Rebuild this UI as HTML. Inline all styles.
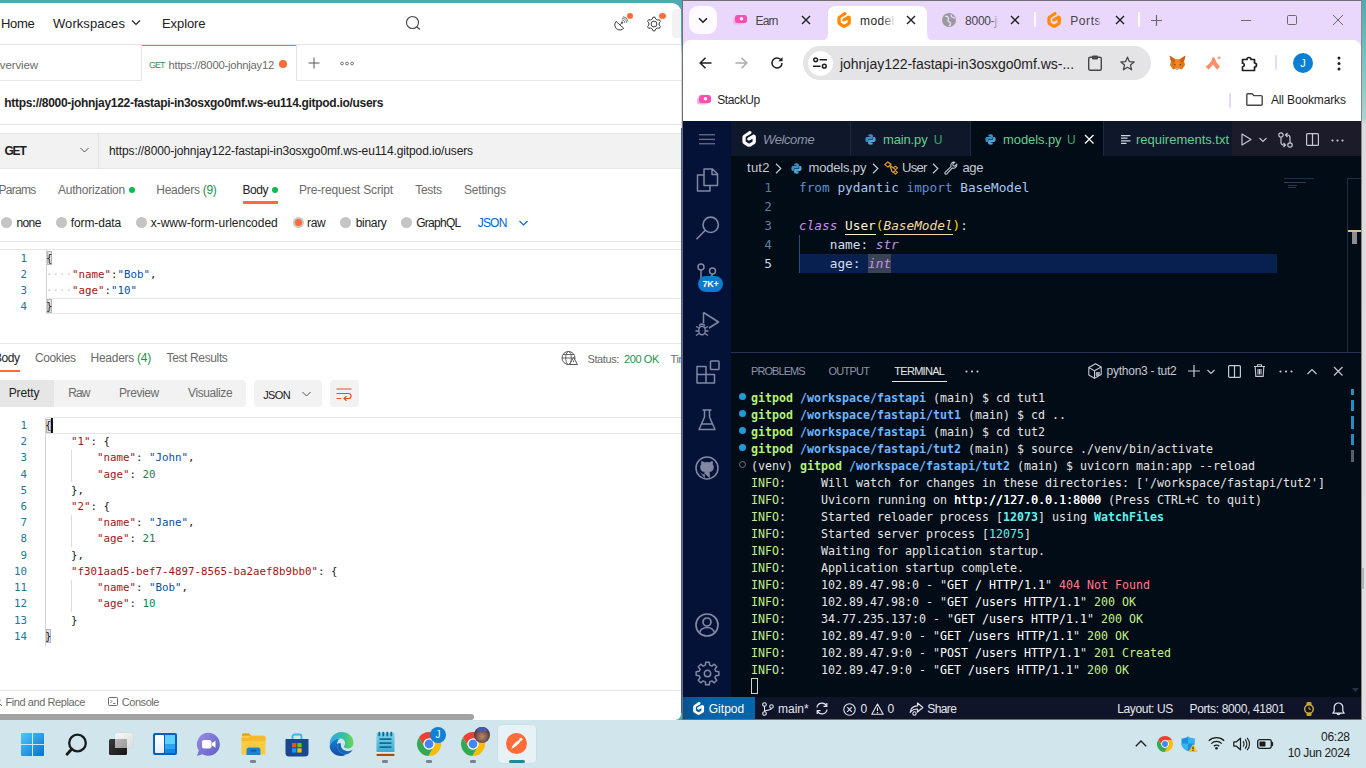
<!DOCTYPE html>
<html lang="en">
<head>
<meta charset="utf-8">
<title>Postman and Gitpod workspace</title>
<style>
*{box-sizing:border-box;margin:0;padding:0}
html,body{width:1366px;height:768px;overflow:hidden;background:#4fa9b1;font-family:"Liberation Sans",sans-serif}
#root{position:relative;width:1366px;height:768px;overflow:hidden;background:#4fa9b1}
.a{position:absolute}
.t{position:absolute;white-space:nowrap;line-height:16px;height:16px}
svg{position:absolute;overflow:visible}
/* ---------- Postman ---------- */
#pm{position:absolute;left:0;top:0;width:681px;height:720px;overflow:hidden;color:#212121}
#pm .t{font-size:12px;color:#6b6b6b;margin-top:.5px}
#pm .hl{position:absolute;left:0;width:681px;height:1px;background:#e6e6e6}
#pm .nav{font-size:14px;color:#212121}
#pm .mono,#pm .ln{margin-top:.5px}
.rad{position:absolute;width:11px;height:11px;border-radius:50%;background:#c4c4c4}
.mono{font-family:"DejaVu Sans Mono","Liberation Mono",monospace;font-size:10.800px;letter-spacing:0;white-space:pre}
.ln{position:absolute;width:27px;text-align:right;left:0;color:#237893;font-family:"DejaVu Sans Mono","Liberation Mono",monospace;font-size:10.800px;line-height:16px;height:16px}
.cl{position:absolute;left:46px;line-height:16px;height:16px;color:#212121}
.k{color:#a31515}.s{color:#0451a5}.n{color:#098658}
/* ---------- Chrome ---------- */
#ch{position:absolute;left:0;top:0;width:1361px;height:720px;overflow:hidden}
#ch .t{font-size:12px;color:#1f1f1f}
/* ---------- VS Code ---------- */
#vs{position:absolute;left:0;top:0;width:1361px;height:720px;color:#ccc;overflow:hidden}
#vs .t{font-size:13px;color:#c5c9d4}
.code{position:absolute;left:799px;font-family:"DejaVu Sans Mono","Liberation Mono",monospace;font-size:12.75px;line-height:19px;height:19px;white-space:pre;color:#d6deeb}
.cln{position:absolute;left:742px;width:30px;text-align:right;font-family:"DejaVu Sans Mono","Liberation Mono",monospace;font-size:12.75px;line-height:19px;height:19px;color:#4b6479}
.term{position:absolute;left:751px;font-family:"DejaVu Sans Mono","Liberation Mono",monospace;font-size:11.63px;line-height:17px;height:17px;white-space:pre;color:#e4e4e4}
.g{color:#b5f078;font-weight:bold}.b{color:#6cb6ff;font-weight:bold}.gi{color:#c3f08a}.cy{color:#5ef2f0;font-weight:bold}.w{color:#fff}.r{color:#ff7b88}
/* ---------- Taskbar ---------- */
#tb{position:absolute;left:0;top:720px;width:1366px;height:48px;background:#d0e5ec}
</style>
</head>
<body>
<div id="root">

<!-- ================= POSTMAN ================= -->
<div class="a" style="left:0;top:3px;width:681px;height:717px;background:#fff;border-radius:0 9px 6px 0"></div>
<div id="pm">
  <!-- header -->
  <div class="t" style="left:1px;top:15.500px;letter-spacing:-0.297px;font-size:13px;color:#212121">Home</div>
  <div class="t" style="left:53px;top:15.500px;letter-spacing:0.070px;font-size:13px;color:#212121">Workspaces</div>
  <svg style="left:131px;top:19px" width="10" height="8" viewBox="0 0 10 8"><path d="M1 1.5 L5 5.5 L9 1.5" fill="none" stroke="#212121" stroke-width="1.2"/></svg>
  <div class="t" style="left:162px;top:15.500px;letter-spacing:-0.083px;font-size:13px;color:#212121">Explore</div>
  <svg style="left:405px;top:15px" width="18" height="18" viewBox="0 0 18 18"><circle cx="7.5" cy="7.5" r="6" fill="none" stroke="#444" stroke-width="1.1"/><path d="M12 12 L15 14.5" stroke="#444" stroke-width="1.1" fill="none"/></svg>
  <svg style="left:612px;top:14px" width="18" height="18" viewBox="0 0 18 18"><path d="M4.100 7.400A5.100 5.100 0 0 0 11.700 14.300Z" fill="none" stroke="#3d3d3d" stroke-width="1" stroke-linejoin="round"/><path d="M7.900 10.850L9.600 9.100" stroke="#3d3d3d" stroke-width="1"/><circle cx="10.100" cy="8.600" r="1" fill="#3d3d3d"/><path d="M9.76 5.91A2.8 2.8 0 0 1 12.79 8.94 M10.00 4.10A4.6 4.6 0 0 1 14.60 8.70 M10.86 2.56A6.2 6.2 0 0 1 16.06 7.41" fill="none" stroke="#555" stroke-width=".8"/></svg>
  <div class="a" style="left:627px;top:13px;width:6.200px;height:6.200px;border-radius:50%;background:#ff6c37"></div>
  <svg style="left:646px;top:15.700px" width="16" height="16" viewBox="0 0 16 16"><path d="M6.36 2.96L6.99 1.17L9.01 1.17L9.64 2.96L11.55 4.06L13.41 3.71L14.42 5.46L13.18 6.90L13.18 9.10L14.42 10.54L13.41 12.29L11.55 11.94L9.64 13.04L9.01 14.83L6.99 14.83L6.36 13.04L4.45 11.94L2.59 12.29L1.58 10.54L2.82 9.10L2.82 6.90L1.58 5.46L2.59 3.71L4.45 4.06Z M5.10 8.00a2.90 2.90 0 1 0 5.80 0a2.90 2.90 0 1 0 -5.80 0Z" fill="none" stroke="#3d3d3d" stroke-width="1" stroke-linejoin="round"/></svg>
  <div class="a" style="left:659px;top:13px;width:6.800px;height:6.200px;border-radius:50%;background:#ff6c37"></div>
  <div class="a" style="left:672px;top:9px;width:12px;height:29px;background:#f2f2f2;border-radius:4px"></div>
  <div class="hl" style="top:44px"></div>
  <!-- tab bar -->
  <div class="t" style="left:-9px;top:56.5px;letter-spacing:-0.117px;font-size:11.500px">Overview</div>
  <div class="a" style="left:141px;top:45px;width:1px;height:35px;background:#e6e6e6"></div>
  <div class="a" style="left:142px;top:45px;width:154px;height:1px;background:#ff6c37"></div>
  <div class="a" style="left:296px;top:45px;width:1px;height:35px;background:#e6e6e6"></div>
  <div class="t" style="left:149px;top:56.5px;letter-spacing:-1.005px;font-size:9px;color:#1f9d55">GET</div>
  <div class="t" style="left:168.5px;top:56.5px;letter-spacing:-0.258px;font-size:11.300px">https://8000-johnjay12</div>
  <div class="a" style="left:279px;top:60px;width:8px;height:7.5px;border-radius:50%;background:#ff6c37"></div>
  <svg style="left:308px;top:57px" width="12" height="12" viewBox="0 0 12 12"><path d="M6 0.5V11.5M0.5 6H11.500" stroke="#555" stroke-width="1"/></svg>
  <svg style="left:340px;top:61px" width="14" height="5" viewBox="0 0 14 5"><circle cx="2" cy="2.500" r="1.400" fill="none" stroke="#555" stroke-width=".8"/><circle cx="7" cy="2.500" r="1.400" fill="none" stroke="#555" stroke-width=".8"/><circle cx="12" cy="2.500" r="1.400" fill="none" stroke="#555" stroke-width=".8"/></svg>
  <div class="hl" style="top:80px"></div>
  <div class="a" style="left:142px;top:80px;width:154px;height:1px;background:#fff"></div>
  <!-- title -->
  <div class="t" style="left:4.25px;top:94px;letter-spacing:-0.304px;font-weight:bold;color:#212121">https://8000-johnjay122-fastapi-in3osxgo0mf.ws-eu114.gitpod.io/users</div>
  <div class="hl" style="top:124px"></div>
  <!-- url bar -->
  <div class="a" style="left:0;top:133px;width:681px;height:36px;background:#f2f2f2;border-top:1px solid #e6e6e6;border-bottom:1px solid #e6e6e6"></div>
  <div class="a" style="left:98px;top:133px;width:1px;height:36px;background:#e2e2e2"></div>
  <div class="t" style="left:4.5px;top:142px;letter-spacing:-1.224px;font-weight:bold;color:#212121">GET</div>
  <svg style="left:80px;top:147px" width="9" height="7" viewBox="0 0 9 7"><path d="M0.5 1 L4.5 5 L8.500 1" fill="none" stroke="#555" stroke-width="1"/></svg>
  <div class="t" style="left:109px;top:142px;letter-spacing:-0.118px;color:#212121">https://8000-johnjay122-fastapi-in3osxgo0mf.ws-eu114.gitpod.io/users</div>
  <!-- request tabs -->
  <div class="t" style="left:-1.5px;top:181px;letter-spacing:-0.724px;">Params</div>
  <div class="t" style="left:58px;top:181px;letter-spacing:-0.234px;">Authorization</div>
  <div class="a" style="left:129px;top:186.5px;width:6px;height:6px;border-radius:50%;background:#0cbb52"></div>
  <div class="t" style="left:156.25px;top:181px;letter-spacing:-0.284px;">Headers <span style="color:#1f8f4d">(9)</span></div>
  <div class="t" style="left:242.5px;top:181px;letter-spacing:-0.465px;color:#212121">Body</div>
  <div class="a" style="left:271.500px;top:186.5px;width:6px;height:6px;border-radius:50%;background:#0cbb52"></div>
  <div class="a" style="left:242.5px;top:201px;width:35px;height:2.5px;background:#ff6c37"></div>
  <div class="t" style="left:299px;top:181px;letter-spacing:-0.150px;">Pre-request Script</div>
  <div class="t" style="left:415.25px;top:181px;letter-spacing:-0.303px;">Tests</div>
  <div class="t" style="left:464px;top:181px;letter-spacing:-0.201px;">Settings</div>
  <!-- radios -->
  <div class="rad" style="left:1.25px;top:217px"></div>
  <div class="rad" style="left:56px;top:217px"></div>
  <div class="rad" style="left:135.75px;top:217px"></div>
  <div class="rad" style="left:340.25px;top:217px"></div>
  <div class="rad" style="left:401px;top:217px"></div>
  <div class="rad" style="left:292.500px;top:217px;background:#ff6c37;border:2px solid #c9c9c9"></div>
  <div class="t" style="left:16.5px;top:214px;letter-spacing:-0.613px;color:#212121">none</div>
  <div class="t" style="left:70.75px;top:214px;letter-spacing:-0.123px;color:#212121">form-data</div>
  <div class="t" style="left:150.75px;top:214px;letter-spacing:-0.018px;color:#212121">x-www-form-urlencoded</div>
  <div class="t" style="left:307px;top:214px;letter-spacing:-0.281px;color:#212121">raw</div>
  <div class="t" style="left:355.75px;top:214px;letter-spacing:-0.323px;color:#212121">binary</div>
  <div class="t" style="left:416.25px;top:214px;letter-spacing:-0.730px;color:#212121">GraphQL</div>
  <div class="t" style="left:477.75px;top:214px;letter-spacing:-0.816px;color:#0265d2">JSON</div>
  <svg style="left:518.500px;top:219.500px" width="9" height="7" viewBox="0 0 9 7"><path d="M0.5 1 L4.5 5 L8.500 1" fill="none" stroke="#0265d2" stroke-width="1.1"/></svg>
  <div class="hl" style="top:241px"></div>
  <!-- request editor -->
  <div class="hl" style="top:249px"></div>
  <div class="hl" style="top:298px;left:46px"></div>
  <div class="hl" style="top:313px;left:46px"></div>
  <div class="a" style="left:46px;top:250px;width:1px;height:64px;background:#d4d4d4"></div>
  <div class="ln" style="top:250.25px">1</div>
  <div class="ln" style="top:266.25px">2</div>
  <div class="ln" style="top:282.25px">3</div>
  <div class="ln" style="top:298.25px">4</div>
  <div class="a" style="left:46.5px;top:251px;width:5.5px;height:14px;border:1px solid #b4b4b4;background:#e4e4e4"></div>
  <div class="a" style="left:46.5px;top:299px;width:5.5px;height:14px;border:1px solid #b4b4b4;background:#e4e4e4"></div>
  <div class="cl mono" style="top:250.250px">{</div>
  <div class="cl mono" style="top:266.250px"><span style="color:#c8c8c8">····</span><span class="k">"name"</span>:<span class="s">"Bob"</span>,</div>
  <div class="cl mono" style="top:282.250px"><span style="color:#c8c8c8">····</span><span class="k">"age"</span>:<span class="s">"10"</span></div>
  <div class="cl mono" style="top:298.250px">}</div>
  <!-- response header -->
  <div class="hl" style="top:343px"></div>
  <div class="t" style="left:-6px;top:349px;letter-spacing:-0.465px;color:#212121">Body</div>
  <div class="a" style="left:0;top:369.500px;width:19.500px;height:2.500px;background:#ff6c37"></div>
  <div class="t" style="left:35px;top:349px;letter-spacing:-0.408px;">Cookies</div>
  <div class="t" style="left:90.5px;top:349px;letter-spacing:-0.261px;">Headers <span style="color:#1f8f4d">(4)</span></div>
  <div class="t" style="left:166.5px;top:349px;letter-spacing:-0.363px;">Test Results</div>
  <svg style="left:561px;top:350px" width="17" height="16" viewBox="0 0 17 16"><circle cx="7.500" cy="8" r="6.500" fill="none" stroke="#555" stroke-width="1"/><ellipse cx="7.500" cy="8" rx="2.800" ry="6.500" fill="none" stroke="#555" stroke-width=".9"/><path d="M1 8H14M2 4.500H13" stroke="#555" stroke-width=".9" fill="none"/><path d="M12.500 7.500L16.500 14.500H8.500Z" fill="#fff" stroke="#555" stroke-width="1"/><path d="M12.500 10.500V12.200" stroke="#555" stroke-width="1"/></svg>
  <div class="t" style="left:587.5px;top:350px;letter-spacing:-0.393px;font-size:11px">Status:</div>
  <div class="t" style="left:624px;top:350px;letter-spacing:-0.385px;font-size:11px;color:#1f8f4d">200 OK</div>
  <div class="t" style="left:670.5px;top:350px;letter-spacing:-0.319px;font-size:11px">Time:</div>
  <!-- view bar -->
  <div class="a" style="left:-6px;top:380px;width:252px;height:27px;background:#f2f2f2;border-radius:4px"></div>
  <div class="a" style="left:-6px;top:380px;width:60px;height:27px;background:#e6e6e6;border-radius:4px 0 0 4px"></div>
  <div class="t" style="left:8.75px;top:384px;letter-spacing:-0.141px;color:#212121">Pretty</div>
  <div class="t" style="left:68.25px;top:384px;letter-spacing:-0.922px;">Raw</div>
  <div class="t" style="left:119px;top:384px;letter-spacing:-0.420px;">Preview</div>
  <div class="t" style="left:188px;top:384px;letter-spacing:-0.396px;">Visualize</div>
  <div class="a" style="left:254px;top:380px;width:68px;height:27px;background:#f2f2f2;border-radius:4px"></div>
  <div class="t" style="left:263.25px;top:386px;letter-spacing:-0.648px;color:#212121;font-size:11px">JSON</div>
  <svg style="left:302px;top:391px" width="9" height="7" viewBox="0 0 9 7"><path d="M0.5 1 L4.5 5 L8.500 1" fill="none" stroke="#555" stroke-width="1"/></svg>
  <div class="a" style="left:329.500px;top:380px;width:29px;height:27px;background:#f2f2f2;border-radius:4px"></div>
  <svg style="left:336px;top:387px" width="16" height="14" viewBox="0 0 16 14"><path d="M0.5 2H15.500M0.5 6.500H12.500a2.500 2.500 0 0 1 0 5H8.500M0.5 11.500H5" fill="none" stroke="#e8501e" stroke-width="1.200"/><path d="M10.500 9.200L8 11.500L10.500 13.800" fill="none" stroke="#e8501e" stroke-width="1.200"/></svg>
  <!-- response editor -->
  <div class="hl" style="top:417px;left:46px"></div>
  <div class="hl" style="top:433px;left:46px"></div>
  <div class="a" style="left:45px;top:418px;width:1px;height:228px;background:#d4d4d4"></div>
  <div class="a" style="left:45.5px;top:418.5px;width:5.5px;height:14px;border:1px solid #b4b4b4;background:#e4e4e4"></div>
  <div class="a" style="left:51px;top:418px;width:1.500px;height:15px;background:#111"></div>
  <div class="a" style="left:45.5px;top:628.5px;width:5.5px;height:14px;border:1px solid #b4b4b4;background:#e4e4e4"></div>
  <div class="a" style="left:71px;top:450px;width:1px;height:32px;background:#dcdcdc"></div>
  <div class="a" style="left:71px;top:515px;width:1px;height:32px;background:#dcdcdc"></div>
  <div class="a" style="left:71px;top:579.5px;width:1px;height:32px;background:#dcdcdc"></div>
  <div class="ln" style="top:417.50px">1</div><div class="cl mono" style="left:45px;top:417.50px">{</div>
  <div class="ln" style="top:433.71px">2</div><div class="cl mono" style="left:45px;top:433.71px">    <span class="k">"1"</span>: {</div>
  <div class="ln" style="top:449.92px">3</div><div class="cl mono" style="left:45px;top:449.92px">        <span class="k">"name"</span>: <span class="s">"John"</span>,</div>
  <div class="ln" style="top:466.13px">4</div><div class="cl mono" style="left:45px;top:466.13px">        <span class="k">"age"</span>: <span class="n">20</span></div>
  <div class="ln" style="top:482.34px">5</div><div class="cl mono" style="left:45px;top:482.34px">    },</div>
  <div class="ln" style="top:498.55px">6</div><div class="cl mono" style="left:45px;top:498.55px">    <span class="k">"2"</span>: {</div>
  <div class="ln" style="top:514.76px">7</div><div class="cl mono" style="left:45px;top:514.76px">        <span class="k">"name"</span>: <span class="s">"Jane"</span>,</div>
  <div class="ln" style="top:530.97px">8</div><div class="cl mono" style="left:45px;top:530.97px">        <span class="k">"age"</span>: <span class="n">21</span></div>
  <div class="ln" style="top:547.18px">9</div><div class="cl mono" style="left:45px;top:547.18px">    },</div>
  <div class="ln" style="top:563.39px">10</div><div class="cl mono" style="left:45px;top:563.39px">    <span class="k">"f301aad5-bef7-4897-8565-ba2aef8b9bb0"</span>: {</div>
  <div class="ln" style="top:579.60px">11</div><div class="cl mono" style="left:45px;top:579.60px">        <span class="k">"name"</span>: <span class="s">"Bob"</span>,</div>
  <div class="ln" style="top:595.81px">12</div><div class="cl mono" style="left:45px;top:595.81px">        <span class="k">"age"</span>: <span class="n">10</span></div>
  <div class="ln" style="top:612.02px">13</div><div class="cl mono" style="left:45px;top:612.02px">    }</div>
  <div class="ln" style="top:628.23px">14</div><div class="cl mono" style="left:45px;top:628.23px">}</div>
  <!-- footer -->
  <div class="hl" style="top:690px"></div>
  <svg style="left:-8.500px;top:696px" width="11" height="11" viewBox="0 0 11 11"><circle cx="4.500" cy="4.500" r="3.500" fill="none" stroke="#6b6b6b" stroke-width="1"/><path d="M7 7L10 10" stroke="#6b6b6b" stroke-width="1"/></svg>
  <div class="t" style="left:5.5px;top:693.5px;letter-spacing:-0.421px;font-size:11px">Find and Replace</div>
  <svg style="left:108px;top:697px" width="10" height="9" viewBox="0 0 10 9"><rect x=".5" y=".5" width="9" height="8" rx="1" fill="none" stroke="#6b6b6b" stroke-width="1"/><path d="M2.500 3L4 4.500L2.500 6M5 6.500H7.500" fill="none" stroke="#6b6b6b" stroke-width=".9"/></svg>
  <div class="t" style="left:121.75px;top:693.5px;letter-spacing:-0.444px;font-size:11px">Console</div>
  <div class="a" style="left:0;top:714px;width:473.500px;height:6px;background:#a3a3a3;border-radius:0 3px 3px 0"></div>
</div>
<div class="a" style="left:681px;top:10px;width:1px;height:125px;background:linear-gradient(180deg,#4fa9b1 0,#5fb0b6 24%,#c9d9da 36%,#e2e2e2 100%)"></div>
<div class="a" style="left:681px;top:128px;width:1px;height:585px;background:#3f5f96"></div>

<!-- ================= CHROME ================= -->
<div class="a" style="left:682px;top:0;width:680px;height:121px;background:#707070"></div>
<div class="a" style="left:683px;top:1px;width:678px;height:52px;background:#ead7fc"></div>
<div id="ch">
  <!-- tab strip -->
  <div class="a" style="left:689px;top:6px;width:27.500px;height:27.500px;border-radius:9px;background:#fdfbff"></div>
  <svg style="left:698px;top:16.500px" width="10" height="7" viewBox="0 0 10 7"><path d="M1 1.200L5 5.200L9 1.200" fill="none" stroke="#1f1f1f" stroke-width="1.600"/></svg>
  <svg style="left:732.5px;top:15px" width="14" height="10" viewBox="0 0 14 10"><rect x="0" y="2.500" width="11" height="7" rx="2" fill="#fbb3dd"/><rect x="2" y="0" width="12" height="8" rx="2.500" fill="#f94fb4"/><circle cx="8.500" cy="3.800" r="1.700" fill="#fff"/></svg>
  <div class="t" style="left:755.5px;top:13.0px;letter-spacing:-0.840px;color:#45454a">Earn</div>
  <svg style="left:801.5px;top:16.0px" width="8" height="8" viewBox="0 0 8 8"><path d="M0 0L8 8M8 0L0 8" stroke="#1f1f1f" stroke-width="1.4" fill="none"/></svg>
  <svg style="left:820px;top:6px" width="115" height="35" viewBox="0 0 115 35"><path d="M0 35 Q8 35 8 27 V8 Q8 0 16 0 H99 Q107 0 107 8 V27 Q107 35 115 35 Z" fill="#fff"/></svg>
  <svg style="left:835.5px;top:12px" width="16" height="16" viewBox="0 0 27.500 31.500"><path d="M18.4 1.5c.9 1.6.4 3.600-1.200 4.500L7.600 11.500a.6.600 0 0 0-.3.500v8.600c0 .2.100.4.300.5l6.100 3.500c.2.100.4.100.6 0l6.100-3.500a.6.600 0 0 0 .3-.5v-5.300l-5.500 3.100c-1.600.9-3.600.3-4.500-1.300s-.3-3.600 1.200-4.500l8.700-4.900c3-1.700 6.700.5 6.700 3.900v9.300c0 2.200-1.200 4.300-3.100 5.400l-7.100 4c-1.900 1.100-4.300 1.100-6.200 0l-7.100-4A6.200 6.200 0 0 1 .7 20.900v-8.200c0-2.200 1.200-4.300 3.100-5.400L13.900.3c1.600-.9 3.600-.3 4.500 1.200z" fill="#ff8a00"/></svg>
  <div class="t" style="left:860px;top:13px;width:34px;overflow:hidden;letter-spacing:0.385px">models</div>
  <div class="a" style="left:882px;top:10px;width:14px;height:22px;background:linear-gradient(90deg,rgba(255,255,255,0),#fff)"></div>
  <svg style="left:906.5px;top:16.0px" width="8" height="8" viewBox="0 0 8 8"><path d="M0 0L8 8M8 0L0 8" stroke="#1f1f1f" stroke-width="1.4" fill="none"/></svg>
  <svg style="left:941.500px;top:13px" width="14" height="14" viewBox="0 0 14 14"><circle cx="7" cy="7" r="7" fill="#9a9a9e"/><path d="M3 3.500c1.500-.5 3 .2 3.500 1.500s-1 1.800-.5 3 2 .5 2.500 1.800-.8 2.700-1.500 3.200M9 1.500c.5 1 .2 2 1.200 2.500s2 .3 2.500 1.500" fill="none" stroke="#ead7fc" stroke-width="1.300"/></svg>
  <div class="t" style="left:965px;top:13px;width:33px;overflow:hidden;letter-spacing:-0.219px;color:#45454a">8000-jo</div>
  <div class="a" style="left:991px;top:10px;width:8px;height:22px;background:linear-gradient(90deg,rgba(234,215,252,0),#ead7fc)"></div>
  <svg style="left:1011.0px;top:16.0px" width="8" height="8" viewBox="0 0 8 8"><path d="M0 0L8 8M8 0L0 8" stroke="#1f1f1f" stroke-width="1.4" fill="none"/></svg>
  <div class="a" style="left:1034px;top:12px;width:2px;height:15px;background:#fff;border-radius:1px"></div>
  <svg style="left:1046px;top:12px" width="16" height="16" viewBox="0 0 27.500 31.500"><path d="M18.4 1.5c.9 1.6.4 3.600-1.200 4.500L7.600 11.500a.6.600 0 0 0-.3.500v8.600c0 .2.100.4.300.5l6.100 3.500c.2.100.4.100.6 0l6.100-3.500a.6.600 0 0 0 .3-.5v-5.300l-5.500 3.100c-1.600.9-3.600.3-4.500-1.300s-.3-3.600 1.200-4.500l8.700-4.900c3-1.700 6.700.5 6.700 3.900v9.300c0 2.200-1.200 4.300-3.100 5.400l-7.100 4c-1.900 1.100-4.300 1.100-6.200 0l-7.100-4A6.200 6.200 0 0 1 .7 20.900v-8.200c0-2.200 1.200-4.300 3.100-5.400L13.900.3c1.600-.9 3.600-.3 4.500 1.200z" fill="#ff8a00"/></svg>
  <div class="t" style="left:1070.250px;top:13px;width:33px;overflow:hidden;letter-spacing:0.582px;color:#45454a">Ports - </div>
  <div class="a" style="left:1098px;top:10px;width:7px;height:22px;background:linear-gradient(90deg,rgba(234,215,252,.45),#ead7fc 90%)"></div>
  <svg style="left:1115.75px;top:16.0px" width="8" height="8" viewBox="0 0 8 8"><path d="M0 0L8 8M8 0L0 8" stroke="#1f1f1f" stroke-width="1.4" fill="none"/></svg>
  <div class="a" style="left:1138px;top:12px;width:2px;height:15px;background:#fff;border-radius:1px"></div>
  <svg style="left:1150.500px;top:14.500px" width="11" height="11" viewBox="0 0 11 11"><path d="M5.500 0V11M0 5.500H11" stroke="#6a6a6a" stroke-width="1.200"/></svg>
  <div class="a" style="left:1240.500px;top:20px;width:10px;height:1px;background:#6a6a6a"></div>
  <div class="a" style="left:1286.500px;top:15px;width:10px;height:10px;border:1px solid #6a6a6a;border-radius:1.500px"></div>
  <svg style="left:1332.5px;top:15.0px" width="10" height="10" viewBox="0 0 10 10"><path d="M0 0L10 10M10 0L0 10" stroke="#6a6a6a" stroke-width="1" fill="none"/></svg>
  <!-- toolbar -->
  <div class="a" style="left:683px;top:40px;width:678px;height:81px;background:#fff;border-radius:8px 8px 0 0"></div>
  <svg style="left:698.500px;top:57px" width="13" height="12" viewBox="0 0 13 12"><path d="M6.500 .7L1.200 6L6.500 11.300M1.200 6H12.500" fill="none" stroke="#1f1f1f" stroke-width="1.500"/></svg>
  <svg style="left:734.500px;top:57px" width="13" height="12" viewBox="0 0 13 12"><path d="M6.500 .7L11.800 6L6.500 11.300M11.800 6H.5" fill="none" stroke="#ababab" stroke-width="1.500"/></svg>
  <svg style="left:770px;top:56px" width="14" height="14" viewBox="0 0 14 14"><path d="M12 7a5 5 0 1 1-1.600-3.700" fill="none" stroke="#1f1f1f" stroke-width="1.500"/><path d="M12.500 1v4.200h-4.200z" fill="#1f1f1f"/></svg>
  <div class="a" style="left:803px;top:46px;width:347.500px;height:33.500px;border-radius:17px;background:#e4e3e6"></div>
  <div class="a" style="left:807.500px;top:50.500px;width:25px;height:25px;border-radius:50%;background:#fff"></div>
  <svg style="left:813px;top:57px" width="14" height="12" viewBox="0 0 14 12"><path d="M6.500 2.800H14M0 9.200H7.500" stroke="#1f1f1f" stroke-width="1.600"/><circle cx="2.700" cy="2.800" r="1.900" fill="none" stroke="#1f1f1f" stroke-width="1.500"/><circle cx="11.300" cy="9.200" r="1.900" fill="none" stroke="#1f1f1f" stroke-width="1.500"/></svg>
  <div class="t" style="left:840px;top:56.0px;letter-spacing:-0.027px;font-size:14px">johnjay122-fastapi-in3osxgo0mf.ws-...</div>
  <svg style="left:1088px;top:55px" width="14" height="16" viewBox="0 0 14 16"><rect x=".7" y="2.200" width="12.600" height="13" rx="1.500" fill="none" stroke="#474747" stroke-width="1.400"/><rect x="4" y=".5" width="6" height="4" rx="1" fill="#474747"/></svg>
  <svg style="left:1119.500px;top:55.500px" width="15" height="15" viewBox="0 0 15 15"><path d="M7.500 1.200L9.400 5.600L14.100 6L10.500 9.100L11.600 13.800L7.500 11.300L3.400 13.800L4.500 9.100L.9 6L5.600 5.600Z" fill="none" stroke="#474747" stroke-width="1.300" stroke-linejoin="round"/></svg>
  <svg style="left:1168.500px;top:55px" width="17" height="16" viewBox="0 0 17 16"><path d="M.5 .5L6.500 4.500H10.500L16.500 .5L15 6L16 10L13 14.500L10 13.500H7L4 14.500L1 10L2 6Z" fill="#e2761b"/><path d="M.5 .5L6.500 4.500L5.500 8L2 6ZM16.500 .5L10.500 4.500L11.500 8L15 6Z" fill="#cd6116"/><path d="M5.500 8L7 13.500H10L11.500 8L10.500 4.500H6.500Z" fill="#f6851b"/><path d="M7 13.500H10L9.500 15H7.500Z" fill="#c0ad9e"/><path d="M4.500 8.500L6.500 9.500L6 10.500ZM12.500 8.500L10.500 9.500L11 10.500Z" fill="#233447"/></svg>
  <svg style="left:1204.500px;top:55px" width="17" height="16" viewBox="0 0 17 16"><path d="M7.800 2.200C7 6 4 9.500 .6 11.600L3.400 14.800L6.200 11.800L8.800 8.300Z" fill="#ff8f6b"/><path d="M7.800 2.200C8.500 2 9.500 2.300 9.800 3C10.800 6.500 12.500 9.500 15 11.600L12.200 14.800L9.600 11.800L7.400 8.600Z" fill="#ff8f6b"/><path d="M14 .3L14.600 2.200L16.500 2.800L14.600 3.400L14 5.300L13.400 3.400L11.500 2.800L13.400 2.200Z" fill="#ff8f6b"/></svg>
  <svg style="left:1241px;top:54.500px" width="17" height="17" viewBox="0 0 17 17"><path d="M1.500 4.500H6a2 2 0 1 1 4 0H13.500V8a2 2 0 1 1 0 4V15.500H1.500V11.800a1.800 1.800 0 1 0 0-3.600Z" fill="none" stroke="#1f1f1f" stroke-width="1.700" stroke-linejoin="round"/></svg>
  <div class="a" style="left:1275px;top:55px;width:2px;height:15px;background:#ead7fc;border-radius:1px"></div>
  <div class="a" style="left:1293px;top:52.500px;width:20px;height:20px;border-radius:50%;background:#0b7fd3;color:#fff;font-size:11px;line-height:20px;text-align:center">J</div>
  <svg style="left:1336.500px;top:55.500px" width="4" height="15" viewBox="0 0 4 15"><circle cx="2" cy="2" r="1.500" fill="#1f1f1f"/><circle cx="2" cy="7.500" r="1.500" fill="#1f1f1f"/><circle cx="2" cy="13" r="1.500" fill="#1f1f1f"/></svg>
  <!-- bookmarks bar -->
  <svg style="left:696.5px;top:94.5px" width="14" height="10" viewBox="0 0 14 10"><rect x="0" y="2.500" width="11" height="7" rx="2" fill="#fbb3dd"/><rect x="2" y="0" width="12" height="8" rx="2.500" fill="#f94fb4"/><circle cx="8.500" cy="3.800" r="1.700" fill="#fff"/></svg>
  <div class="t" style="left:717.25px;top:92.0px;letter-spacing:-0.408px;">StackUp</div>
  <div class="a" style="left:1229px;top:92.500px;width:2px;height:15px;background:#ead7fc;border-radius:1px"></div>
  <svg style="left:1246px;top:93px" width="17" height="13" viewBox="0 0 17 13"><path d="M.8 1.800a1 1 0 0 1 1-1H6L7.800 2.600H15.200a1 1 0 0 1 1 1V11.200a1 1 0 0 1-1 1H1.800a1 1 0 0 1-1-1Z" fill="none" stroke="#474747" stroke-width="1.400"/></svg>
  <div class="t" style="left:1271px;top:92.0px;letter-spacing:-0.149px;">All Bookmarks</div>
  <!-- VSCODE -->
  <div id="vs">
  <div class="a" style="left:683px;top:121px;width:678px;height:599px;background:#010c17"></div>
  <!-- activity bar -->
  <div class="a" style="left:682px;top:121px;width:1px;height:599px;background:#6a6d78"></div>
  <div class="a" style="left:683px;top:121px;width:48px;height:576px;background:#051237"></div>
  <svg style="left:699px;top:134px" width="16" height="11" viewBox="0 0 16 11"><path d="M0 .8H16M0 5.300H16M0 9.800H16" stroke="#8088a2" stroke-width="1"/></svg>
  <svg style="left:695.500px;top:168px" width="23" height="24" viewBox="0 0 23 24"><path d="M8 1H16.500L21.500 6V17.500H8Z M16 1V6.500H21.500" fill="none" stroke="#8088a2" stroke-width="1.500" stroke-linejoin="round"/><path d="M8 7H1.500V23H14V17.500" fill="none" stroke="#8088a2" stroke-width="1.500" stroke-linejoin="round"/></svg>
  <svg style="left:695px;top:214px" width="24" height="27" viewBox="0 0 24 27"><circle cx="15.700" cy="10.800" r="7.700" fill="none" stroke="#8088a2" stroke-width="1.600"/><path d="M10.300 16.300L1.500 25.300" stroke="#8088a2" stroke-width="1.600"/></svg>
  <svg style="left:696px;top:263px" width="22" height="24" viewBox="0 0 22 24"><circle cx="5" cy="4" r="3" fill="none" stroke="#8088a2" stroke-width="1.500"/><circle cx="16.500" cy="8" r="3" fill="none" stroke="#8088a2" stroke-width="1.500"/><path d="M5 7V22M16.500 11c0 5-11.500 3-11.500 8" fill="none" stroke="#8088a2" stroke-width="1.500"/></svg>
  <div class="a" style="left:698px;top:276px;width:25px;height:16px;border-radius:8px;background:#0b7ccf;color:#fff;font-size:9px;font-weight:bold;line-height:16px;text-align:center;letter-spacing:-.2px">7K+</div>
  <svg style="left:694.500px;top:311px" width="25" height="26" viewBox="0 0 25 26"><path d="M8.500 1.500L23.500 11L14 17" fill="none" stroke="#8088a2" stroke-width="1.500" stroke-linejoin="round"/><path d="M8.500 1.500V12" stroke="#8088a2" stroke-width="1.500"/><ellipse cx="7" cy="19.500" rx="3.300" ry="4.200" fill="none" stroke="#8088a2" stroke-width="1.400"/><path d="M1 15.500L4 17M13 15.500L10 17M.5 20H3.700M10.300 20H13.500M1 24.500L4 22.500M13 24.500L10 22.500M4.500 15.500a2.500 2.500 0 0 1 5 0" fill="none" stroke="#8088a2" stroke-width="1.300"/></svg>
  <svg style="left:695.500px;top:360px" width="24" height="24" viewBox="0 0 24 24"><path d="M1 6.500H10V23H1ZM1 14.500H18.500V23H10" fill="none" stroke="#8088a2" stroke-width="1.500" stroke-linejoin="round"/><rect x="14.500" y="1" width="8.500" height="8.500" rx=".8" fill="none" stroke="#8088a2" stroke-width="1.500"/></svg>
  <svg style="left:698px;top:409px" width="18" height="22" viewBox="0 0 18 22"><path d="M4.500 1H13.500M6.500 1V8L1 20.500H17L11.500 8V1M3.500 15H14.500" fill="none" stroke="#8088a2" stroke-width="1.500" stroke-linejoin="round"/></svg>
  <svg style="left:695px;top:456px" width="24" height="24" viewBox="0 0 24 24"><circle cx="12" cy="12" r="11" fill="none" stroke="#8088a2" stroke-width="1.500"/><path d="M9.500 22V18.500C7 19.200 6.300 17.300 5.500 16.800M14.500 22V18c0-1-.3-1.600-.7-2 2.500-.3 4.700-1.300 4.700-5 0-1.100-.4-2-1-2.800.2-.6.300-1.500-.1-2.700 0 0-.9-.3-2.900 1.100a9.500 9.500 0 0 0-5 0C7.500 5.200 6.600 5.500 6.600 5.500c-.4 1.200-.3 2.100-.1 2.700-.6.800-1 1.700-1 2.800 0 3.700 2.200 4.700 4.700 5-.3.300-.6.800-.7 1.500" fill="#8088a2" stroke="#8088a2" stroke-width=".6"/></svg>
  <svg style="left:695px;top:612.800px" width="24" height="24" viewBox="0 0 24 24"><circle cx="12" cy="12" r="11" fill="none" stroke="#8088a2" stroke-width="1.700"/><circle cx="12" cy="9" r="4" fill="none" stroke="#8088a2" stroke-width="1.700"/><path d="M4.500 20c1-4 4-5.500 7.500-5.500s6.500 1.500 7.500 5.500" fill="none" stroke="#8088a2" stroke-width="1.500"/></svg>
  <svg style="left:694.500px;top:660.800px" width="25" height="25" viewBox="0 0 25 25"><path d="M10.36 4.17L10.70 1.14L14.30 1.14L14.64 4.17L16.88 5.10L19.26 3.20L21.80 5.74L19.90 8.12L20.83 10.36L23.86 10.70L23.86 14.30L20.83 14.64L19.90 16.88L21.80 19.26L19.26 21.80L16.88 19.90L14.64 20.83L14.30 23.86L10.70 23.86L10.36 20.83L8.12 19.90L5.74 21.80L3.20 19.26L5.10 16.88L4.17 14.64L1.14 14.30L1.14 10.70L4.17 10.36L5.10 8.12L3.20 5.74L5.74 3.20L8.12 5.10Z M9.30 12.50a3.20 3.20 0 1 0 6.40 0a3.20 3.20 0 1 0 -6.40 0Z" fill="none" stroke="#8088a2" stroke-width="1.500" stroke-linejoin="round"/></svg>
  <!-- editor tabs -->
  <div class="a" style="left:731px;top:121px;width:501px;height:35px;background:#0f172b"></div>
  <div class="a" style="left:1232px;top:121px;width:129px;height:35px;background:#1b1b2a"></div>
  <div class="a" style="left:970px;top:121px;width:133px;height:35px;background:#010c17"></div>
  <div class="a" style="left:850px;top:121px;width:1px;height:35px;background:#1d2840"></div>
  <div class="a" style="left:970px;top:121px;width:1px;height:35px;background:#1d2840"></div>
  <div class="a" style="left:1103px;top:121px;width:1px;height:35px;background:#1d2840"></div>
  <svg style="left:740.5px;top:131px" width="16" height="16" viewBox="0 0 27.500 31.500"><path d="M18.4 1.5c.9 1.6.4 3.600-1.200 4.500L7.600 11.500a.6.600 0 0 0-.3.500v8.600c0 .2.100.4.300.5l6.100 3.500c.2.100.4.100.6 0l6.100-3.500a.6.600 0 0 0 .3-.5v-5.300l-5.500 3.100c-1.600.9-3.600.3-4.500-1.300s-.3-3.600 1.200-4.500l8.700-4.900c3-1.700 6.700.5 6.700 3.900v9.300c0 2.200-1.200 4.300-3.100 5.400l-7.100 4c-1.900 1.100-4.300 1.100-6.200 0l-7.100-4A6.200 6.200 0 0 1 .7 20.900v-8.200c0-2.200 1.200-4.300 3.100-5.400L13.900.3c1.600-.9 3.600-.3 4.500 1.200z" fill="#fff"/></svg>
  <div class="t" style="left:763px;top:132.0px;letter-spacing:-0.386px;font-style:italic;color:#8d94a8">Welcome</div>
  <svg style="left:865px;top:133.5px" width="11" height="11" viewBox="0 0 12 12"><path d="M5.900 .3C3.500 .3 3.600 1.400 3.600 1.400V2.800H6V3.300H2.300S.4 3.100 .4 5.900 2 8.600 2 8.600H3.100V7.200S3 5.600 4.700 5.600H7.100S8.600 5.600 8.600 4.100V1.800S8.800 .3 5.900 .3Z" fill="#3c8fc4"/><path d="M6.100 11.700C8.500 11.700 8.400 10.600 8.400 10.600V9.200H6V8.700H9.700S11.600 8.900 11.600 6.100 10 3.400 10 3.400H8.900V4.800S9 6.400 7.300 6.400H4.900S3.400 6.400 3.400 7.900V10.200S3.200 11.700 6.100 11.700Z" fill="#52a7d8"/></svg>
  <div class="t" style="left:883px;top:132.0px;letter-spacing:-0.147px;color:#62d08f">main.py</div>
  <div class="t" style="left:933.75px;top:132.0px;letter-spacing:-1.922px;color:#3fa96a;font-size:12px">U</div>
  <svg style="left:985px;top:133.5px" width="11" height="11" viewBox="0 0 12 12"><path d="M5.900 .3C3.500 .3 3.600 1.400 3.600 1.400V2.800H6V3.300H2.300S.4 3.100 .4 5.900 2 8.600 2 8.600H3.100V7.200S3 5.600 4.700 5.600H7.100S8.600 5.600 8.600 4.100V1.800S8.800 .3 5.900 .3Z" fill="#3c8fc4"/><path d="M6.100 11.700C8.500 11.700 8.400 10.600 8.400 10.600V9.200H6V8.700H9.700S11.600 8.900 11.600 6.100 10 3.400 10 3.400H8.900V4.800S9 6.400 7.300 6.400H4.900S3.400 6.400 3.400 7.900V10.200S3.200 11.700 6.100 11.700Z" fill="#52a7d8"/></svg>
  <div class="t" style="left:1003px;top:132.0px;letter-spacing:-0.083px;color:#62d08f">models.py</div>
  <div class="t" style="left:1067px;top:132.0px;letter-spacing:-0.922px;color:#3fa96a;font-size:12px">U</div>
  <svg style="left:1084.75px;top:135.25px" width="8.5" height="8.5" viewBox="0 0 8.5 8.5"><path d="M0 0L8.5 8.5M8.5 0L0 8.5" stroke="#fff" stroke-width="1.3" fill="none"/></svg>
  <svg style="left:1121px;top:135px" width="10" height="9" viewBox="0 0 10 9"><path d="M0 .6H9.500M0 3.200H6.500M0 5.800H9.500M0 8.400H5.500" stroke="#d0d4de" stroke-width="1.200"/></svg>
  <div class="t" style="left:1136px;top:132.0px;letter-spacing:-0.013px;color:#62d08f">requirements.txt</div>
  <svg style="left:1241px;top:133px" width="11" height="13" viewBox="0 0 11 13"><path d="M1 1L10 6.500L1 12Z" fill="none" stroke="#c5c9d4" stroke-width="1.200" stroke-linejoin="round"/></svg>
  <svg style="left:1259px;top:137px" width="8" height="6" viewBox="0 0 8 6"><path d="M.5 1L4 4.500L7.500 1" fill="none" stroke="#c5c9d4" stroke-width="1.100"/></svg>
  <svg style="left:1278px;top:131.500px" width="15" height="16" viewBox="0 0 15 16"><circle cx="3" cy="3" r="2.200" fill="none" stroke="#c5c9d4" stroke-width="1.200"/><circle cx="12" cy="13" r="2.200" fill="none" stroke="#c5c9d4" stroke-width="1.200"/><path d="M3 5.200V10.500a2.500 2.500 0 0 0 2.500 2.500H7M5.500 11L7.500 13L5.500 15M12 10.800V5.500a2.500 2.500 0 0 0-2.500-2.500H8M9.500 1L7.500 3L9.500 5" fill="none" stroke="#c5c9d4" stroke-width="1.200"/></svg>
  <svg style="left:1305.500px;top:133px" width="13" height="13" viewBox="0 0 13 13"><rect x=".6" y=".6" width="11.800" height="11.800" rx="1" fill="none" stroke="#c5c9d4" stroke-width="1.200"/><path d="M6.500 .6V12.400" stroke="#c5c9d4" stroke-width="1.200"/></svg>
  <svg style="left:1331px;top:138.500px" width="13" height="3" viewBox="0 0 13 3"><circle cx="1.500" cy="1.500" r="1.100" fill="#c5c9d4"/><circle cx="6.500" cy="1.500" r="1.100" fill="#c5c9d4"/><circle cx="11.500" cy="1.500" r="1.100" fill="#c5c9d4"/></svg>
  <!-- breadcrumbs -->
  <div class="t" style="left:747px;top:160.0px;letter-spacing:0.266px;">tut2</div>
  <svg style="left:775.25px;top:162.5px" width="7" height="11" viewBox="0 0 7 11"><path d="M1 .8L5.800 5.500L1 10.200" fill="none" stroke="#c5c9d4" stroke-width="1.200"/></svg>
  <svg style="left:790.5px;top:162.5px" width="11" height="11" viewBox="0 0 12 12"><path d="M5.900 .3C3.500 .3 3.600 1.400 3.600 1.400V2.800H6V3.300H2.300S.4 3.100 .4 5.900 2 8.600 2 8.600H3.100V7.200S3 5.600 4.700 5.600H7.100S8.600 5.600 8.600 4.100V1.800S8.800 .3 5.900 .3Z" fill="#3c8fc4"/><path d="M6.100 11.700C8.500 11.700 8.400 10.600 8.400 10.600V9.200H6V8.700H9.700S11.600 8.900 11.600 6.100 10 3.400 10 3.400H8.900V4.800S9 6.400 7.300 6.400H4.900S3.400 6.400 3.400 7.900V10.200S3.200 11.700 6.100 11.700Z" fill="#52a7d8"/></svg>
  <div class="t" style="left:808.5px;top:160.0px;letter-spacing:-0.167px;">models.py</div>
  <svg style="left:871.5px;top:162.5px" width="7" height="11" viewBox="0 0 7 11"><path d="M1 .8L5.800 5.500L1 10.200" fill="none" stroke="#c5c9d4" stroke-width="1.200"/></svg>
  <svg style="left:884px;top:161px" width="15" height="14" viewBox="0 0 15 14"><path d="M.8 3.600L3.800 .9L7 3.300L4 6.100Z" fill="none" stroke="#ee9d28" stroke-width="1.200" stroke-linejoin="round"/><path d="M5.800 4.600L9.300 6.800M6.200 5.200L8 10.500L9.300 11.300" fill="none" stroke="#ee9d28" stroke-width="1.200"/><path d="M9.300 6.900L11.300 5.200L13.600 6.900L11.500 8.700Z" fill="none" stroke="#ee9d28" stroke-width="1.100" stroke-linejoin="round"/><path d="M9.300 11.300L11.300 9.700L13.600 11.400L11.500 13.100Z" fill="none" stroke="#ee9d28" stroke-width="1.100" stroke-linejoin="round"/></svg>
  <div class="t" style="left:902px;top:160.0px;letter-spacing:-0.676px;">User</div>
  <svg style="left:932.0px;top:162.5px" width="7" height="11" viewBox="0 0 7 11"><path d="M1 .8L5.800 5.500L1 10.200" fill="none" stroke="#c5c9d4" stroke-width="1.200"/></svg>
  <svg style="left:944px;top:161px" width="14" height="14" viewBox="0 0 14 14"><path d="M12.800 3.200a3.300 3.300 0 0 1-4.500 3.700L2.800 12.800a1.100 1.100 0 0 1-1.700-1.500L7 5.600A3.300 3.300 0 0 1 10.800 1.200L8.800 3.200 9.200 4.800 10.800 5.200Z" fill="none" stroke="#c5c9d4" stroke-width="1.100" stroke-linejoin="round"/></svg>
  <div class="t" style="left:962.5px;top:160.0px;letter-spacing:-0.401px;">age</div>
  <!-- code -->
  <div class="a" style="left:799px;top:254px;width:477.500px;height:19px;background:#07204f"></div>
  <div class="a" style="left:867.500px;top:254px;width:23.500px;height:19px;background:#3a4356"></div>
  <div class="a" style="left:799px;top:235px;width:1px;height:38px;background:#2b4a7d"></div>
  <div class="a" style="left:845px;top:233.500px;width:30.500px;height:1.500px;background:#fff2c2"></div>
  <div class="a" style="left:884px;top:233.500px;width:68.500px;height:1.500px;background:#f3d9a4"></div>
  <div class="cln" style="top:178.0px;color:#5d7d9c">1</div>
  <div class="cln" style="top:196.75px;color:#5d7d9c">2</div>
  <div class="cln" style="top:215.5px;color:#5d7d9c">3</div>
  <div class="cln" style="top:234.75px;color:#5d7d9c">4</div>
  <div class="cln" style="top:253.75px;color:#c9d6e6">5</div>
  <div class="code" style="top:178px"><span style="color:#5f8fd0">from</span> <span style="color:#a8c7f5">pydantic</span> <span style="color:#5f8fd0">import</span> <span style="color:#a8c7f5">BaseModel</span></div>
  <div class="code" style="top:215.500px"><span style="font-style:italic;color:#c792ea">class</span> <span style="color:#fff3cf">User</span><span style="color:#ffd700">(</span><span style="font-style:italic;color:#f3d9a4">BaseModel</span><span style="color:#ffd700">)</span>:</div>
  <div class="code" style="top:234.750px">    name: <span style="font-style:italic;color:#c792ea">str</span></div>
  <div class="code" style="top:253.750px">    age: <span style="font-style:italic;color:#c792ea">int</span></div>
  <div class="a" style="left:1284px;top:178px;width:30px;height:1px;background:#3c5b86;opacity:.45"></div>
  <div class="a" style="left:1284px;top:182px;width:22px;height:1px;background:#8d86a0;opacity:.4"></div>
  <div class="a" style="left:1288px;top:184.500px;width:9px;height:1px;background:#7d8fb0;opacity:.35"></div>
  <div class="a" style="left:1288px;top:186.500px;width:8px;height:1px;background:#56607a;opacity:.5"></div>
  <div class="a" style="left:1346.500px;top:178px;width:1px;height:174px;background:#252b40"></div>
  <div class="a" style="left:1346.500px;top:177.500px;width:14px;height:1px;background:#252b40"></div>
  <div class="a" style="left:1347.500px;top:229.500px;width:13px;height:2.500px;background:#d9c08a"></div>
  <div class="a" style="left:1351.500px;top:232px;width:5px;height:11.500px;background:#8c8c92"></div>
  <!-- panel -->
  <div class="a" style="left:731px;top:351.500px;width:630px;height:1px;background:#2a2f55"></div>
  <div class="t" style="left:751px;top:362.500px;letter-spacing:-0.924px;font-size:11px;color:#8d94a8">PROBLEMS</div>
  <div class="t" style="left:828.5px;top:362.500px;letter-spacing:-0.747px;font-size:11px;color:#8d94a8">OUTPUT</div>
  <div class="t" style="left:894.25px;top:362.500px;letter-spacing:-0.703px;font-size:11px;color:#e7e7e7">TERMINAL</div>
  <div class="a" style="left:892px;top:381px;width:55px;height:1px;background:#e7e7e7"></div>
  <svg style="left:965px;top:369.500px" width="14" height="3" viewBox="0 0 14 3"><circle cx="1.500" cy="1.500" r="1.100" fill="#c5c9d4"/><circle cx="7" cy="1.500" r="1.100" fill="#c5c9d4"/><circle cx="12.500" cy="1.500" r="1.100" fill="#c5c9d4"/></svg>
  <svg style="left:1087.500px;top:363px" width="14" height="16" viewBox="0 0 14 16"><path d="M7.500 .8L13.200 4V11.500L6.500 15.200L.8 12V4.500Z" fill="none" stroke="#c5c9d4" stroke-width="1.100" stroke-linejoin="round"/><path d="M.8 4.500L6.500 7.700V15.200M6.500 7.700L13.200 4" fill="none" stroke="#c5c9d4" stroke-width="1.100"/><rect x="7.800" y="9" width="4" height="4" fill="#c5c9d4" opacity=".8"/></svg>
  <div class="t" style="left:1106.5px;top:362.500px;letter-spacing:-0.242px;font-size:12px">python3 - tut2</div>
  <svg style="left:1188px;top:365px" width="12" height="12" viewBox="0 0 12 12"><path d="M6 0V12M0 6H12" stroke="#c5c9d4" stroke-width="1.200"/></svg>
  <svg style="left:1207px;top:369px" width="8" height="6" viewBox="0 0 8 6"><path d="M.5 1L4 4.500L7.500 1" fill="none" stroke="#c5c9d4" stroke-width="1.100"/></svg>
  <svg style="left:1227.500px;top:364.500px" width="13" height="13" viewBox="0 0 13 13"><rect x=".6" y=".6" width="11.800" height="11.800" rx="1" fill="none" stroke="#c5c9d4" stroke-width="1.200"/><path d="M6.500 .6V12.400" stroke="#c5c9d4" stroke-width="1.200"/></svg>
  <svg style="left:1253.500px;top:364px" width="11" height="13" viewBox="0 0 11 13"><path d="M0 2.500H11M3.500 2.500V.8H7.500V2.500M1.200 2.500L1.800 12.400H9.200L9.800 2.500M4 5V10.500M5.500 5V10.500M7 5V10.500" fill="none" stroke="#c5c9d4" stroke-width="1.100"/></svg>
  <svg style="left:1279px;top:369.500px" width="14" height="3" viewBox="0 0 14 3"><circle cx="1.500" cy="1.500" r="1.100" fill="#c5c9d4"/><circle cx="7" cy="1.500" r="1.100" fill="#c5c9d4"/><circle cx="12.500" cy="1.500" r="1.100" fill="#c5c9d4"/></svg>
  <svg style="left:1306.500px;top:367.500px" width="10" height="7" viewBox="0 0 10 7"><path d="M.5 6L5 1.500L9.500 6" fill="none" stroke="#c5c9d4" stroke-width="1.200"/></svg>
  <svg style="left:1333.5px;top:366.75px" width="8.5" height="8.5" viewBox="0 0 8.5 8.5"><path d="M0 0L8.5 8.5M8.5 0L0 8.5" stroke="#c5c9d4" stroke-width="1.2" fill="none"/></svg>
  <!-- terminal -->
  <div class="a" style="left:738.500px;top:393.00px;width:7px;height:7px;border-radius:50%;background:#1f9bd6"></div>
  <div class="term" style="top:390.00px"><span class="g">gitpod</span> <span class="b">/workspace/fastapi</span> (main) $ cd tut1</div>
  <div class="a" style="left:738.500px;top:409.98px;width:7px;height:7px;border-radius:50%;background:#1f9bd6"></div>
  <div class="term" style="top:406.98px"><span class="g">gitpod</span> <span class="b">/workspace/fastapi/tut1</span> (main) $ cd ..</div>
  <div class="a" style="left:738.500px;top:426.96px;width:7px;height:7px;border-radius:50%;background:#1f9bd6"></div>
  <div class="term" style="top:423.96px"><span class="g">gitpod</span> <span class="b">/workspace/fastapi</span> (main) $ cd tut2</div>
  <div class="a" style="left:738.500px;top:443.94px;width:7px;height:7px;border-radius:50%;background:#1f9bd6"></div>
  <div class="term" style="top:440.94px"><span class="g">gitpod</span> <span class="b">/workspace/fastapi/tut2</span> (main) $ source ./venv/bin/activate</div>
  <div class="a" style="left:738.500px;top:460.92px;width:7px;height:7px;border-radius:50%;border:1.500px solid #6d7386"></div>
  <div class="term" style="top:457.92px">(venv) <span class="g">gitpod</span> <span class="b">/workspace/fastapi/tut2</span> (main) $ uvicorn main:app --reload</div>
  <div class="term" style="top:474.90px"><span class="gi">INFO</span>:     Will watch for changes in these directories: ['/workspace/fastapi/tut2']</div>
  <div class="term" style="top:491.88px"><span class="gi">INFO</span>:     Uvicorn running on <span class="w" style="text-shadow:.35px 0 0 #fff">http://127.0.0.1:8000</span> (Press CTRL+C to quit)</div>
  <div class="term" style="top:508.86px"><span class="gi">INFO</span>:     Started reloader process [<span class="cy">12073</span>] using <span class="cy">WatchFiles</span></div>
  <div class="term" style="top:525.84px"><span class="gi">INFO</span>:     Started server process [<span class="cy" style="font-weight:normal">12075</span>]</div>
  <div class="term" style="top:542.82px"><span class="gi">INFO</span>:     Waiting for application startup.</div>
  <div class="term" style="top:559.80px"><span class="gi">INFO</span>:     Application startup complete.</div>
  <div class="term" style="top:576.78px"><span class="gi">INFO</span>:     102.89.47.98:0 - "<span class="w">GET / HTTP/1.1</span>" <span class="r">404 Not Found</span></div>
  <div class="term" style="top:593.76px"><span class="gi">INFO</span>:     102.89.47.98:0 - "<span class="w">GET /users HTTP/1.1</span>" <span class="gi">200 OK</span></div>
  <div class="term" style="top:610.74px"><span class="gi">INFO</span>:     34.77.235.137:0 - "<span class="w">GET /users HTTP/1.1</span>" <span class="gi">200 OK</span></div>
  <div class="term" style="top:627.72px"><span class="gi">INFO</span>:     102.89.47.9:0 - "<span class="w">GET /users HTTP/1.1</span>" <span class="gi">200 OK</span></div>
  <div class="term" style="top:644.70px"><span class="gi">INFO</span>:     102.89.47.9:0 - "<span class="w">POST /users HTTP/1.1</span>" <span class="gi">201 Created</span></div>
  <div class="term" style="top:661.68px"><span class="gi">INFO</span>:     102.89.47.9:0 - "<span class="w">GET /users HTTP/1.1</span>" <span class="gi">200 OK</span></div>
  <div class="a" style="left:751px;top:678px;width:7px;height:16px;border:1px solid #d0d0d0"></div>
  <div class="a" style="left:1350.500px;top:388.75px;width:3.500px;height:6.25px;background:#1f8fc4"></div>
  <div class="a" style="left:1350.500px;top:400px;width:3.500px;height:11px;background:#1f8fc4"></div>
  <div class="a" style="left:1350.500px;top:416px;width:3.500px;height:12.75px;background:#1f8fc4"></div>
  <div class="a" style="left:1350.500px;top:433.75px;width:3.500px;height:11.25px;background:#1f8fc4"></div>
  <div class="a" style="left:1350.500px;top:450px;width:3.500px;height:12px;background:#5a5f6b"></div>
  <svg style="left:1351.500px;top:688px" width="7" height="4" viewBox="0 0 7 4"><path d="M0 0H7L3.500 4Z" fill="#2a3145"/></svg>
  <!-- status bar -->
  <div class="a" style="left:683px;top:697px;width:678px;height:23px;background:#0f1428"></div>
  <div class="a" style="left:683px;top:697px;width:72px;height:23px;background:linear-gradient(90deg,#04528f,#0565ab 35%,#0565ab)"></div>
  <div class="a" style="left:682px;top:719.300px;width:679px;height:.7px;background:#6e6e6e"></div>
  <svg style="left:692px;top:702px" width="13" height="13" viewBox="0 0 27.500 31.500"><path d="M18.4 1.5c.9 1.6.4 3.600-1.200 4.500L7.600 11.500a.6.600 0 0 0-.3.500v8.600c0 .2.100.4.300.5l6.100 3.500c.2.100.4.100.6 0l6.100-3.500a.6.600 0 0 0 .3-.5v-5.300l-5.500 3.100c-1.600.9-3.600.3-4.500-1.300s-.3-3.600 1.200-4.500l8.700-4.900c3-1.700 6.700.5 6.700 3.900v9.300c0 2.200-1.200 4.300-3.100 5.400l-7.100 4c-1.900 1.100-4.300 1.100-6.200 0l-7.100-4A6.200 6.200 0 0 1 .7 20.900v-8.200c0-2.200 1.200-4.300 3.100-5.400L13.900.3c1.600-.9 3.600-.3 4.500 1.200z" fill="#fff"/></svg>
  <div class="t" style="left:708.75px;top:701.0px;letter-spacing:0.023px;font-size:12px;color:#fff">Gitpod</div>
  <svg style="left:761.500px;top:701.500px" width="12" height="14" viewBox="0 0 12 14"><circle cx="2.500" cy="2.500" r="1.800" fill="none" stroke="#e4e6ee" stroke-width="1.100"/><circle cx="2.500" cy="11.500" r="1.800" fill="none" stroke="#e4e6ee" stroke-width="1.100"/><circle cx="9.500" cy="4.500" r="1.800" fill="none" stroke="#e4e6ee" stroke-width="1.100"/><path d="M2.500 4.300V9.700M9.500 6.300C9.500 9 2.500 7.500 2.500 9.700" fill="none" stroke="#e4e6ee" stroke-width="1.100"/></svg>
  <div class="t" style="left:778px;top:701.0px;letter-spacing:0.013px;font-size:12px;color:#e4e6ee">main*</div>
  <svg style="left:815px;top:702px" width="14" height="13" viewBox="0 0 14 13"><path d="M2 5.500A5 5 0 0 1 11.500 4M12 7.500A5 5 0 0 1 2.500 9" fill="none" stroke="#e4e6ee" stroke-width="1.200"/><path d="M11.800 1V4.300H8.500M2.200 12V8.700H5.500" fill="none" stroke="#e4e6ee" stroke-width="1.200"/></svg>
  <svg style="left:843px;top:702.500px" width="13" height="13" viewBox="0 0 13 13"><circle cx="6.500" cy="6.500" r="5.700" fill="none" stroke="#e4e6ee" stroke-width="1.100"/><path d="M4.200 4.200L8.800 8.800M8.800 4.200L4.200 8.800" stroke="#e4e6ee" stroke-width="1.100"/></svg>
  <div class="t" style="left:860.5px;top:701.0px;letter-spacing:-0.938px;font-size:12px;color:#e4e6ee">0</div>
  <svg style="left:870.500px;top:702.500px" width="13" height="12" viewBox="0 0 13 12"><path d="M6.500 1L12.200 11.300H.8Z" fill="none" stroke="#e4e6ee" stroke-width="1.100" stroke-linejoin="round"/><path d="M6.500 4.500V8M6.500 9V10.200" stroke="#e4e6ee" stroke-width="1.100"/></svg>
  <div class="t" style="left:887.5px;top:701.0px;letter-spacing:-0.688px;font-size:12px;color:#e4e6ee">0</div>
  <svg style="left:909px;top:701.500px" width="15" height="14" viewBox="0 0 15 14"><path d="M8.500 1L13.800 5.500L8.500 10V7C4.500 7 2.500 8.500 1.200 10.500C1.500 6.500 4 4 8.500 3.800Z" fill="none" stroke="#e4e6ee" stroke-width="1.200" stroke-linejoin="round"/><circle cx="5.500" cy="11.500" r="1.700" fill="none" stroke="#e4e6ee" stroke-width="1.100"/></svg>
  <div class="t" style="left:927.25px;top:701.0px;letter-spacing:-0.606px;font-size:12px;color:#e4e6ee">Share</div>
  <div class="t" style="left:1117.25px;top:701.0px;letter-spacing:-0.362px;font-size:12px;color:#e4e6ee">Layout: US</div>
  <div class="t" style="left:1189.5px;top:701.0px;letter-spacing:-0.357px;font-size:12px;color:#e4e6ee">Ports: 8000, 41801</div>
  <svg style="left:1303.500px;top:701.500px" width="10" height="14" viewBox="0 0 10 14"><rect x="2.500" y="0" width="5" height="14" rx="1" fill="#c9a227"/><circle cx="5" cy="7" r="4.300" fill="#0f1428" stroke="#d4af37" stroke-width="1.400"/><path d="M5 4.800V7.200H6.800" fill="none" stroke="#d4af37" stroke-width="1"/></svg>
  <svg style="left:1332px;top:702px" width="13" height="14" viewBox="0 0 13 14"><path d="M6.500 1A4.300 4.300 0 0 0 2.200 5.300V9L.8 11.200H12.200L10.800 9V5.300A4.300 4.300 0 0 0 6.500 1ZM5 11.500A1.600 1.600 0 0 0 8 11.500" fill="none" stroke="#e4e6ee" stroke-width="1.200" stroke-linejoin="round"/></svg>
  </div>
</div>
<div class="a" style="left:1361px;top:0;width:5px;height:720px;background:linear-gradient(180deg,#4fa9b1 0,#6db9bd 40px,#a9d3d3 118px,#dadcdc 124px,#dfe1e1 100%)"></div>
<div class="a" style="left:1360.500px;top:0;width:1px;height:720px;background:#8a8a8a"></div>
<div class="a" style="left:1362px;top:568px;width:2px;height:21px;background:#b4b4b4"></div>

<!-- ================= TASKBAR ================= -->
<div id="tb">
  <svg style="left:21px;top:12.750px" width="23" height="23" viewBox="0 0 23 23"><defs><linearGradient id="wg" x1="0" y1="0" x2="1" y2="1"><stop offset="0" stop-color="#4fc8fa"/><stop offset="1" stop-color="#0670cf"/></linearGradient></defs><path d="M0 1a1 1 0 0 1 1-1H11V11H0ZM12 0H22a1 1 0 0 1 1 1V11H12ZM0 12H11V23H1a1 1 0 0 1-1-1ZM12 12H23V22a1 1 0 0 1-1 1H12Z" fill="url(#wg)"/></svg>
  <svg style="left:65px;top:12px" width="24" height="24" viewBox="0 0 24 24"><circle cx="12.500" cy="11" r="8.300" fill="none" stroke="#1c1c1c" stroke-width="2.300"/><path d="M6.800 17L2 22.300" stroke="#1c1c1c" stroke-width="2.800" stroke-linecap="round"/></svg>
  <div class="a" style="left:114.500px;top:12.750px;width:18.500px;height:15.500px;border-radius:1.500px;background:linear-gradient(135deg,#f7f8f8,#d9dcdd);box-shadow:0 0 1px rgba(0,0,0,.25)"></div>
  <div class="a" style="left:108.500px;top:19px;width:18.500px;height:16px;border-radius:1.500px;background:linear-gradient(135deg,#3a3a3a,#151515)"></div>
  <div class="a" style="left:114.500px;top:19px;width:12.500px;height:9.250px;background:linear-gradient(135deg,#b9b9b9,#9a9a9a)"></div>
  <div class="a" style="left:153px;top:12.750px;width:24px;height:22.500px;border-radius:2px;background:#0a5fbd"></div>
  <div class="a" style="left:155px;top:15px;width:8.500px;height:18px;border-radius:1px;background:linear-gradient(180deg,#fff,#e8eef4)"></div>
  <div class="a" style="left:165px;top:15px;width:10px;height:9px;background:#5fd0fb"></div>
  <div class="a" style="left:165px;top:24px;width:10px;height:4.500px;background:#2ba3ee"></div>
  <div class="a" style="left:165px;top:28.500px;width:10px;height:4.500px;background:#1289e4"></div>
  <svg style="left:196px;top:12px" width="25" height="25" viewBox="0 0 25 25"><defs><linearGradient id="cg" x1="0" y1="0" x2="1" y2="1"><stop offset="0" stop-color="#9a8be8"/><stop offset="1" stop-color="#5f5fc4"/></linearGradient></defs><path d="M12.500 .8A11.500 11.500 0 1 1 6.500 22.200L1 24L2.800 18.500A11.500 11.500 0 0 1 12.500 .8Z" fill="url(#cg)"/><rect x="6" y="8" width="9.500" height="8.500" rx="2" fill="#fff"/><path d="M16 11L19.500 8.800V15.800L16 13.500Z" fill="#fff"/></svg>
  <svg style="left:240.500px;top:13px" width="25" height="23" viewBox="0 0 25 23"><path d="M1 1.800a1.500 1.500 0 0 1 1.500-1.500H8L10.500 3H1Z" fill="#e8a317"/><rect x="0.500" y="2.800" width="24" height="19" rx="1.500" fill="#fbcb3f"/><path d="M0.500 8H24.500V4.300a1.500 1.500 0 0 0-1.500-1.500H10L8 5H.5Z" fill="#f7b92a"/><path d="M5.500 22V17a2.500 2.500 0 0 1 2.500-2.500H17a2.500 2.500 0 0 1 2.500 2.500V22Z" fill="#1683d8"/><rect x="9.500" y="16.800" width="6" height="1.600" rx=".8" fill="#0c5ea6"/></svg>
  <div class="a" style="left:250px;top:40.200px;width:6.200px;height:2.500px;border-radius:1.250px;background:#7a8489"></div>
  <svg style="left:284.500px;top:12.500px" width="24" height="24" viewBox="0 0 24 24"><path d="M7.500 6V3.500a2 2 0 0 1 2-2H14.500a2 2 0 0 1 2 2V6" fill="none" stroke="#3fb4f3" stroke-width="1.800"/><path d="M.5 6H23.500V20a3.500 3.500 0 0 1-3.500 3.500H4A3.500 3.500 0 0 1 .5 20Z" fill="#17498f"/><rect x="7" y="10" width="4.300" height="4.300" fill="#f25022"/><rect x="12.300" y="10" width="4.300" height="4.300" fill="#7fba00"/><rect x="7" y="15.300" width="4.300" height="4.300" fill="#00a4ef"/><rect x="12.300" y="15.300" width="4.300" height="4.300" fill="#ffb900"/></svg>
  <svg style="left:328.500px;top:12px" width="25" height="24" viewBox="0 0 25 24"><defs><linearGradient id="eg1" x1="0" y1="0" x2="1" y2="0"><stop offset="0" stop-color="#2aa5e8"/><stop offset=".6" stop-color="#35c1a0"/><stop offset="1" stop-color="#6fd64a"/></linearGradient><linearGradient id="eg2" x1="0" y1="0" x2="0" y2="1"><stop offset="0" stop-color="#1b7fd6"/><stop offset="1" stop-color="#0c4fa3"/></linearGradient></defs><path d="M12.500 0C19.500 0 24.500 5 24.500 10.500 24.500 14.500 21.500 16.500 19 16.500 16 16.500 14.500 15.500 15 14 15.800 13 16 12 16 11 16 8.500 14 6.500 11 6.500 6 6.500 2 10 .8 13.500 0 6.500 5 0 12.500 0Z" fill="url(#eg1)"/><path d="M.8 13.500C2 10 6 6.500 11 6.500 9 7.500 8 10 8 12.500 8 18 12 22 17 22.500 15.500 23.500 14 24 12.500 24 5.500 24 .2 19 .8 13.500Z" fill="url(#eg2)"/><path d="M8 12.500C8 18 12 22 17 22.500 20 22 22.500 20 23.800 17.500 22 18.800 19.500 19.500 17.500 19 13.500 18.200 11 15 12 11.500 10 11 8.500 11.500 8 12.500Z" fill="#1565c0"/></svg>
  <svg style="left:375.500px;top:12px" width="19" height="24" viewBox="0 0 19 24"><defs><linearGradient id="ng" x1="0" y1="0" x2="0" y2="1"><stop offset="0" stop-color="#7fd3ee"/><stop offset="1" stop-color="#3fa9cf"/></linearGradient></defs><rect x=".5" y=".8" width="18" height="19.800" rx="1" fill="url(#ng)"/><rect x=".5" y="20.200" width="18" height="1.600" fill="#fbf8f3"/><rect x=".5" y="21.700" width="18" height="2.300" rx=".8" fill="#a84b0f"/><path d="M3.300 .6V3.400M7.300 .6V3.400M11.300 .6V3.400M15.300 .6V3.400" stroke="#0a6c96" stroke-width="1.900" stroke-linecap="round"/><path d="M3.500 7.200H15.500M3.500 11.200H15.500M3.500 15.200H15.500" stroke="#0a6f93" stroke-width="1.800"/></svg>
  <div class="a" style="left:381.900px;top:40.200px;width:6.200px;height:2.500px;border-radius:1.250px;background:#7a8489"></div>
  <svg style="left:416.8px;top:12.0px" width="24.0" height="24.0" viewBox="-12 -12 24 24"><circle r="11.800" fill="#fff"/><path d="M-10.10 -6.49A12 12 0 0 1 10.67 -5.50L0.00 -5.50A5.5 5.5 0 0 0 -4.76 2.75Z" fill="#ea4335"/><path d="M10.67 -5.50A12 12 0 0 1 -0.57 11.99L4.76 2.75A5.5 5.5 0 0 0 0.00 -5.50Z" fill="#fbbc05"/><path d="M-0.57 11.99A12 12 0 0 1 -10.10 -6.49L-4.76 2.75A5.5 5.5 0 0 0 4.76 2.75Z" fill="#34a853"/><circle r="5.500" fill="#fff"/><circle r="4.400" fill="#4285f4"/></svg>
  <div class="a" style="left:430px;top:6.800px;width:16px;height:16px;border-radius:50%;background:#0f80d4;color:#fff;font-size:10px;line-height:16px;text-align:center">J</div>
  <div class="a" style="left:425.700px;top:40.200px;width:6.200px;height:2.500px;border-radius:1.250px;background:#7a8489"></div>
  <svg style="left:460.9px;top:12.0px" width="24.0" height="24.0" viewBox="-12 -12 24 24"><circle r="11.800" fill="#fff"/><path d="M-10.10 -6.49A12 12 0 0 1 10.67 -5.50L0.00 -5.50A5.5 5.5 0 0 0 -4.76 2.75Z" fill="#ea4335"/><path d="M10.67 -5.50A12 12 0 0 1 -0.57 11.99L4.76 2.75A5.5 5.5 0 0 0 0.00 -5.50Z" fill="#fbbc05"/><path d="M-0.57 11.99A12 12 0 0 1 -10.10 -6.49L-4.76 2.75A5.5 5.5 0 0 0 4.76 2.75Z" fill="#34a853"/><circle r="5.500" fill="#fff"/><circle r="4.400" fill="#4285f4"/></svg>
  <div class="a" style="left:474px;top:6.800px;width:16px;height:16px;border-radius:50%;background:radial-gradient(circle at 50% 60%,#b98a72 0,#8a5f4e 35%,#3c3550 70%,#2b2a3f 100%);overflow:hidden"><div class="a" style="left:2px;top:-1px;width:12px;height:6px;border-radius:50%;background:#4a5aa8"></div></div>
  <div class="a" style="left:469.800px;top:40.200px;width:6.200px;height:2.500px;border-radius:1.250px;background:#7a8489"></div>
  <div class="a" style="left:498px;top:4.800px;width:38px;height:38px;border-radius:4px;background:#e6f2f6;box-shadow:0 0 0 .5px rgba(0,0,0,.05)"></div>
  <svg style="left:506px;top:13px" width="21" height="21" viewBox="0 0 21 21"><circle cx="10.500" cy="10.500" r="10.500" fill="#ff6c37"/><ellipse cx="10.300" cy="10.900" rx="5.400" ry="1.500" transform="rotate(-42 10.300 10.900)" fill="#fff"/><circle cx="14.900" cy="6.300" r="1.500" fill="#fff"/><path d="M4.600 16.600L7.500 13.200L8.300 14.200Z" fill="#fff"/></svg>
  <div class="a" style="left:509px;top:40px;width:15.500px;height:3px;border-radius:1.500px;background:#1b8a99"></div>
  <svg style="left:1135px;top:20px" width="12" height="7" viewBox="0 0 12 7"><path d="M.8 6.200L6 1L11.200 6.200" fill="none" stroke="#1c1c1c" stroke-width="1.300"/></svg>
  <svg style="left:1156.75px;top:16.0px" width="16.0" height="16.0" viewBox="-12 -12 24 24"><circle r="11.800" fill="#fff"/><path d="M-10.10 -6.49A12 12 0 0 1 10.67 -5.50L0.00 -5.50A5.5 5.5 0 0 0 -4.76 2.75Z" fill="#ea4335"/><path d="M10.67 -5.50A12 12 0 0 1 -0.57 11.99L4.76 2.75A5.5 5.5 0 0 0 0.00 -5.50Z" fill="#fbbc05"/><path d="M-0.57 11.99A12 12 0 0 1 -10.10 -6.49L-4.76 2.75A5.5 5.5 0 0 0 4.76 2.75Z" fill="#34a853"/><circle r="5.500" fill="#fff"/><circle r="4.400" fill="#4285f4"/></svg>
  <svg style="left:1181px;top:15.500px" width="17" height="17" viewBox="0 0 17 17"><path d="M7 .5C9 2 11 2.500 13.500 2.500V7.500C13.500 11 10.500 13.500 7 15 3.500 13.500 .5 11 .5 7.500V2.500C3 2.500 5 2 7 .5Z" fill="#1a8fe3"/><path d="M7 .5C9 2 11 2.500 13.500 2.500V7.500H7Z" fill="#35b6f2"/><path d="M7 7.500H.5C.5 11 3.500 13.500 7 15Z" fill="#35b6f2"/><path d="M12 8L16.500 16H7.500Z" fill="#fcc419"/><path d="M12 10.800V13.300M12 14V15" stroke="#1c1c1c" stroke-width="1.100"/></svg>
  <svg style="left:1208px;top:16px" width="17" height="14" viewBox="0 0 17 14"><path d="M.8 4.800A11 11 0 0 1 16.200 4.800M3.300 7.600A7.300 7.300 0 0 1 13.700 7.600M5.800 10.200A3.800 3.800 0 0 1 11.200 10.200" fill="none" stroke="#1c1c1c" stroke-width="1.300"/><circle cx="8.500" cy="12.300" r="1.300" fill="#1c1c1c"/></svg>
  <svg style="left:1232.500px;top:16.500px" width="17" height="14" viewBox="0 0 17 14"><path d="M.8 4.800H3.500L7.500 1.200V12.800L3.500 9.200H.8Z" fill="none" stroke="#1c1c1c" stroke-width="1.200" stroke-linejoin="round"/><path d="M10 4.500A3.500 3.500 0 0 1 10 9.500M12 2.500A6.300 6.300 0 0 1 12 11.500M14 .8A9 9 0 0 1 14 13.200" fill="none" stroke="#1c1c1c" stroke-width="1.100"/></svg>
  <svg style="left:1256.500px;top:18.500px" width="17" height="10" viewBox="0 0 17 10"><rect x=".7" y=".7" width="13.600" height="8.600" rx="2" fill="none" stroke="#1c1c1c" stroke-width="1.300"/><rect x="2.500" y="2.500" width="6" height="5" rx=".8" fill="#1c1c1c"/><path d="M15.300 3.500V6.500" stroke="#1c1c1c" stroke-width="1.600" stroke-linecap="round"/></svg>
  <div class="t" style="left:1321px;top:8.5px;letter-spacing:-0.256px;font-size:12px;color:#1c1c1c">06:28</div>
  <div class="t" style="left:1287.75px;top:24.750px;letter-spacing:-0.369px;font-size:12px;color:#1c1c1c">10 Jun 2024</div>
</div>

</div>
</body>
</html>
